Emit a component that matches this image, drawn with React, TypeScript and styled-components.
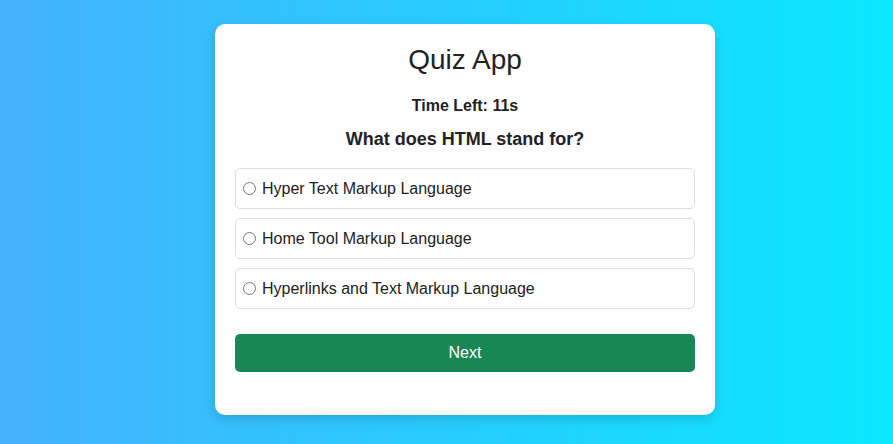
import React, { useState } from "react";
import styled, { createGlobalStyle } from "styled-components";

const GlobalStyle = createGlobalStyle`
  html, body { margin: 0; padding: 0; }
  body {
    font-family: "Liberation Sans", Arial, sans-serif;
    background: linear-gradient(to right, #45b1fe, #0ae8fe);
    min-height: 444px;
  }
`;

const Page = styled.div`
  display: flex;
  justify-content: center;
  align-items: flex-start;
  padding: 24px 0 0 37px;
  min-height: 444px;
  box-sizing: border-box;
`;

const Card = styled.div`
  width: 500px;
  box-sizing: border-box;
  background: #fff;
  border-radius: 10px;
  padding: 20px 20px 43px;
  box-shadow: 0 4px 12px rgba(0, 0, 0, 0.15);
  color: #222;
`;

const Title = styled.h1`
  margin: 0;
  font-size: 28px;
  font-weight: normal;
  line-height: 32px;
  text-align: center;
`;

const Timer = styled.div`
  margin-top: 21px;
  font-size: 16px;
  font-weight: bold;
  line-height: 18px;
  text-align: center;
`;

const Question = styled.h2`
  margin: 14px 0 18px;
  font-size: 18px;
  font-weight: bold;
  line-height: 21px;
  text-align: center;
`;

const Options = styled.div`
  display: flex;
  flex-direction: column;
  gap: 9px;
`;

const Option = styled.label<{ $selected: boolean }>`
  display: flex;
  align-items: center;
  height: 41px;
  box-sizing: border-box;
  padding: 0 7px;
  border: 1px solid #ddd;
  border-radius: 5px;
  font-size: 16px;
  cursor: pointer;
  background: ${(p) => (p.$selected ? "#f3f9ff" : "#fff")};
`;

const Radio = styled.input`
  width: 13px;
  height: 13px;
  margin: 0 6px 0 0;
`;

const NextButton = styled.button`
  display: block;
  width: 100%;
  height: 38px;
  margin-top: 25px;
  border: none;
  border-radius: 5px;
  background: #198754;
  color: #fff;
  font-family: "Liberation Sans", Arial, sans-serif;
  font-size: 16px;
  cursor: pointer;
`;

const options = [
  "Hyper Text Markup Language",
  "Home Tool Markup Language",
  "Hyperlinks and Text Markup Language",
];

export default function App() {
  const [selected, setSelected] = useState<number | null>(null);
  return (
    <>
      <GlobalStyle />
      <Page>
        <Card>
          <Title>Quiz App</Title>
          <Timer>Time Left: 11s</Timer>
          <Question>What does HTML stand for?</Question>
          <Options>
            {options.map((o, i) => (
              <Option key={o} $selected={false}>
                <Radio
                  type="radio"
                  name="q"
                  checked={selected === i}
                  onChange={() => setSelected(i)}
                />
                {o}
              </Option>
            ))}
          </Options>
          <NextButton>Next</NextButton>
        </Card>
      </Page>
    </>
  );
}
